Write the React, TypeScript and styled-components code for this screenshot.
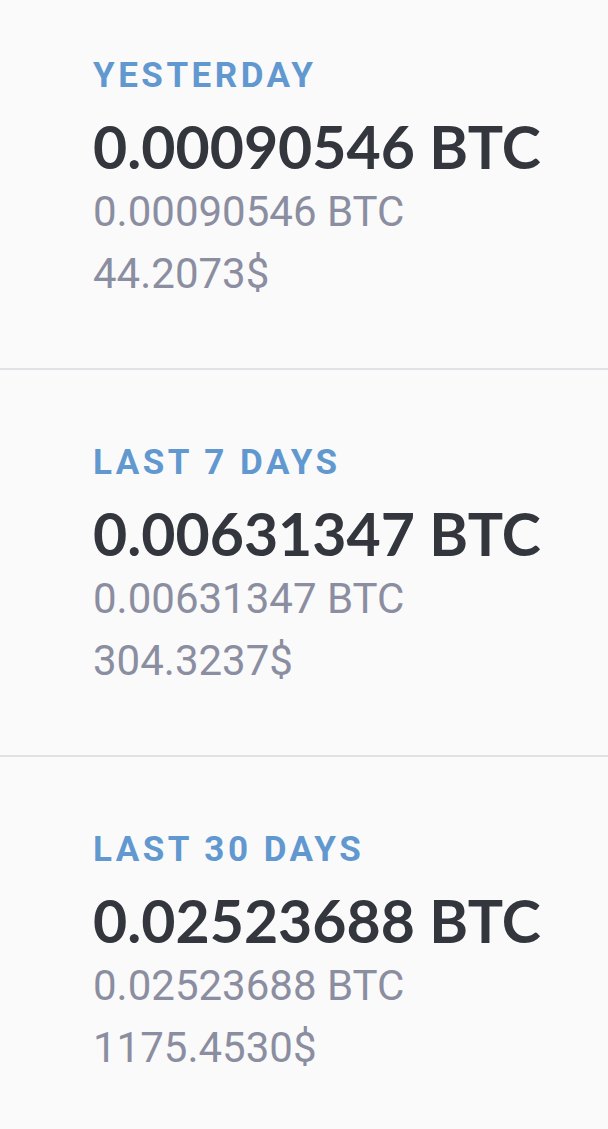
import React from "react"
import styled, { createGlobalStyle } from "styled-components"

const GlobalStyle = createGlobalStyle`
  html, body {
    margin: 0;
    padding: 0;
    background: #fafafb;
  }
  body {
    font-family: Roboto, "Liberation Sans", sans-serif;
    -webkit-font-smoothing: antialiased;
  }
`

type Earning = {
  label: string
  btc: string
  usd: string
}

const earnings: Earning[] = [
  { label: "Yesterday", btc: "0.00090546", usd: "44.2073" },
  { label: "Last 7 days", btc: "0.00631347", usd: "304.3237" },
  { label: "Last 30 days", btc: "0.02523688", usd: "1175.4530" },
]

const Page = styled.main`
  display: flex;
  flex-direction: column;
  width: 608px;
  min-height: 1129px;
  background: #fafafb;
  overflow: hidden;
`

interface sectionProps {
  first?: boolean
}
const Section = styled.section<sectionProps>`
  display: flex;
  flex-direction: column;
  padding: ${props => (props.first ? 56 : 73)}px 24px 63px 93px;
  border-bottom: 2px solid #e1e1e6;
`

const Label = styled.div`
  font-family: Roboto, "Liberation Sans", sans-serif;
  font-weight: 700;
  font-size: 35px;
  line-height: 40px;
  letter-spacing: 3.5px;
  text-transform: uppercase;
  color: #6198cf;
`

const Amount = styled.div`
  margin-top: 19px;
  font-family: Lato, "Liberation Sans", sans-serif;
  font-weight: 700;
  font-size: 59px;
  line-height: 64px;
  color: #33363d;
`

const SubLine = styled.div`
  font-family: Roboto, "Liberation Sans", sans-serif;
  font-weight: 400;
  font-size: 42px;
  line-height: 62px;
  color: #8b8ea0;
`

const SubBlock = styled.div`
  display: flex;
  flex-direction: column;
  margin-top: 2px;
`

export default function App(): JSX.Element {
  return (
    <>
      <GlobalStyle />
      <Page>
        {earnings.map((item, i) => (
          <Section key={item.label} first={i === 0}>
            <Label>{item.label}</Label>
            <Amount>{item.btc} BTC</Amount>
            <SubBlock>
              <SubLine>{item.btc} BTC</SubLine>
              <SubLine>{item.usd}$</SubLine>
            </SubBlock>
          </Section>
        ))}
      </Page>
    </>
  )
}
